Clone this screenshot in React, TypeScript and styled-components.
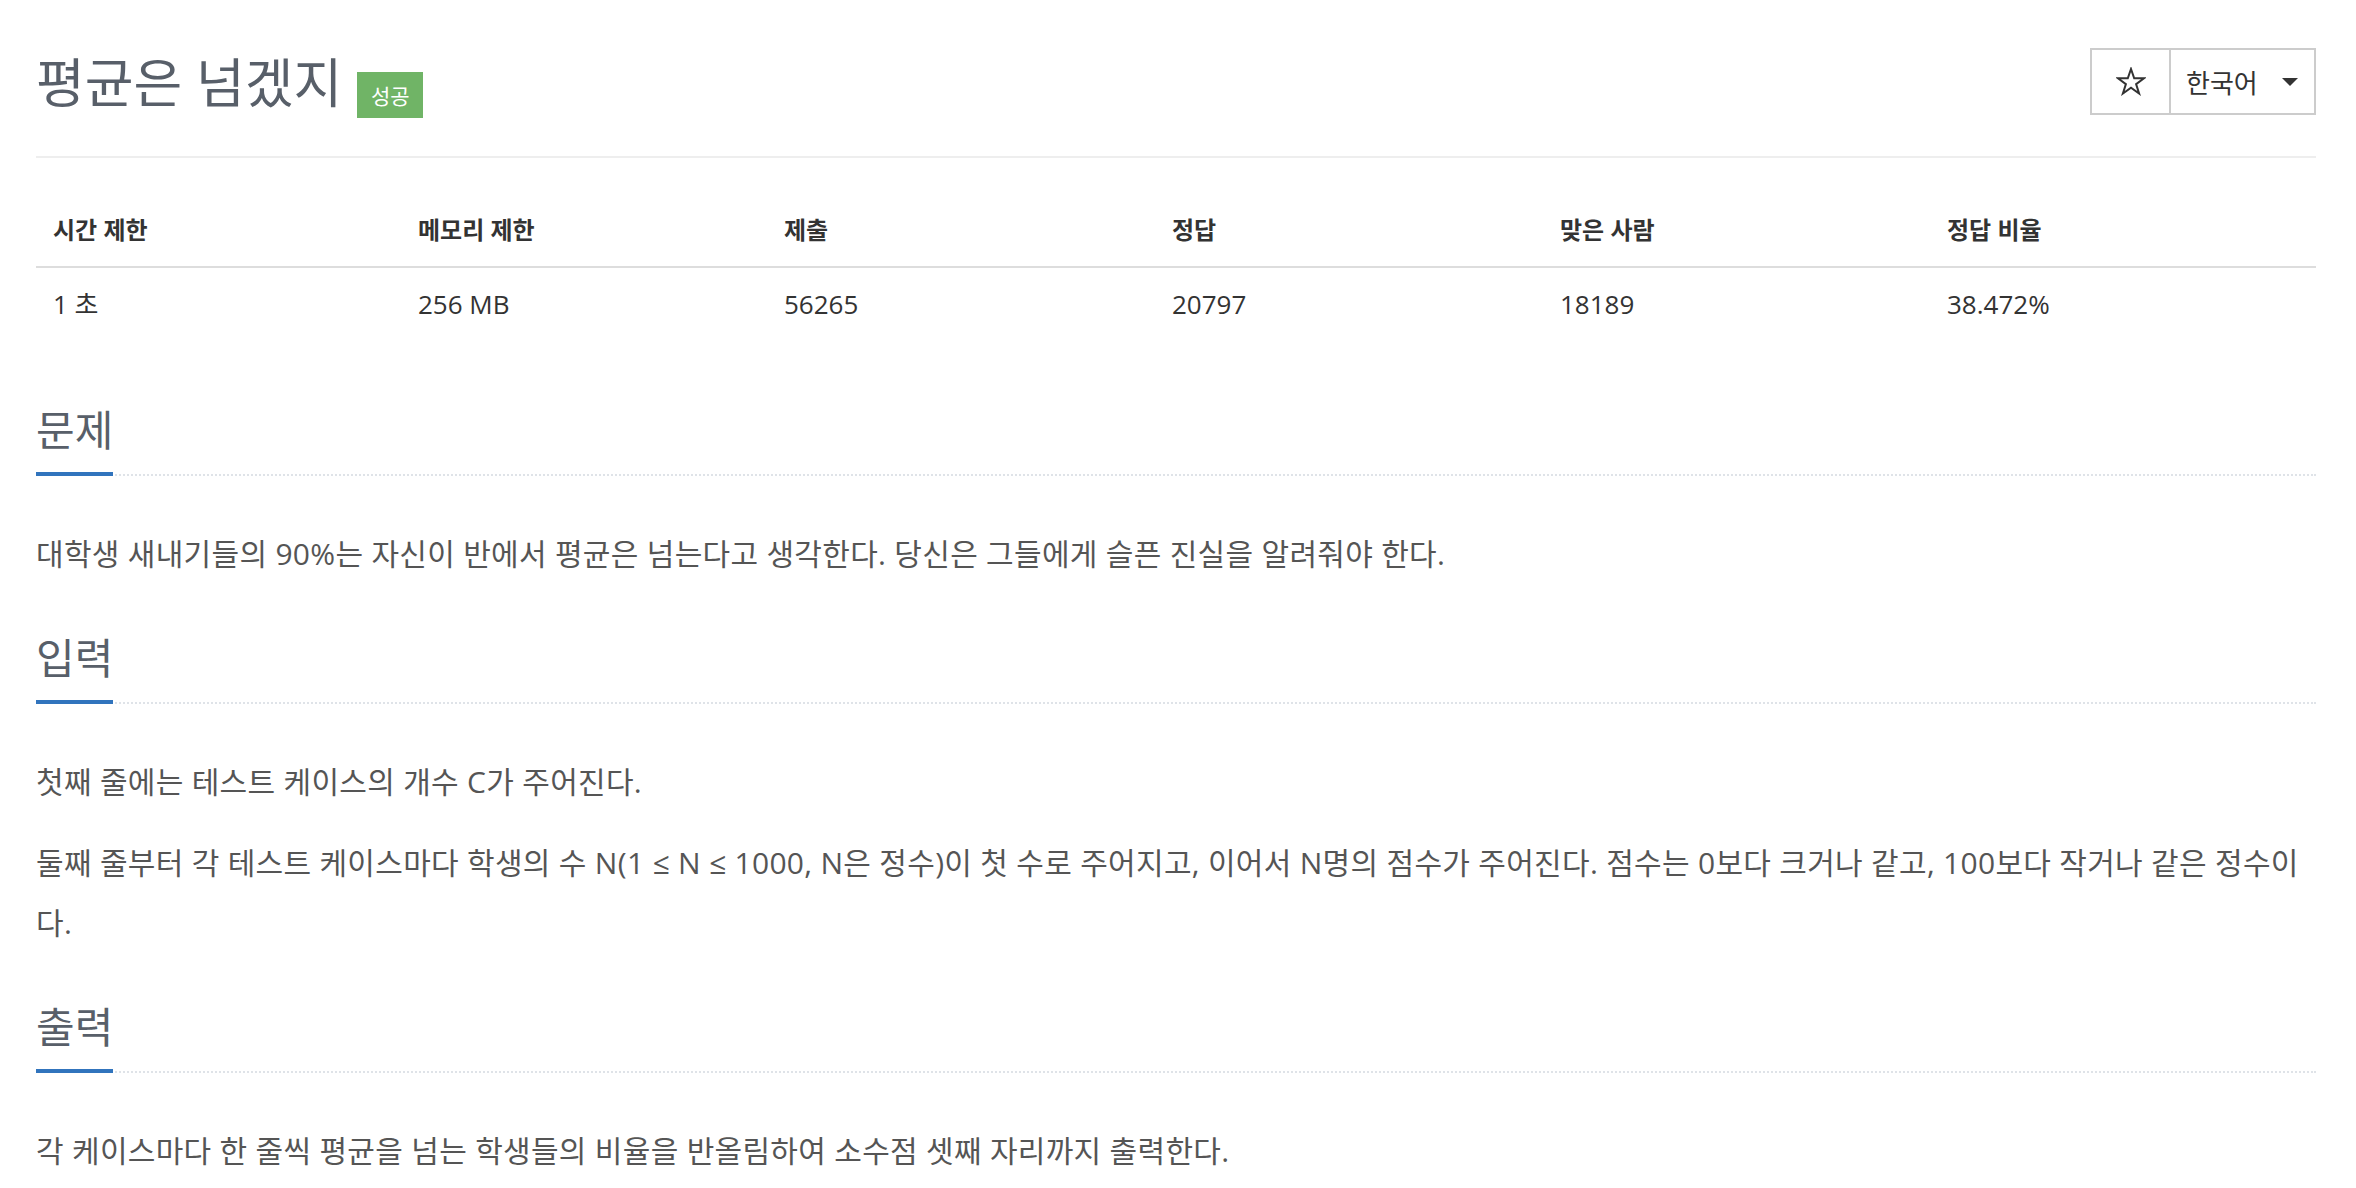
import styled, { createGlobalStyle } from "styled-components";

const GlobalStyle = createGlobalStyle`
  body {
    margin: 0;
    background: #fff;
    font-family: "Open Sans", "Noto Sans CJK KR", sans-serif;
  }
`;

const Page = styled.div`
  width: 2280px;
  margin-left: 36px;
`;

const Header = styled.header`
  display: flex;
  justify-content: space-between;
  align-items: flex-start;
  padding: 48px 0 38px;
  border-bottom: 2px solid #eee;
`;

const TitleRow = styled.div`
  display: flex;
  align-items: flex-end;
  gap: 15px;
`;

const Title = styled.h1`
  margin: 0;
  font-size: 53px;
  line-height: 70px;
  font-weight: 400;
  color: #585f69;
`;

const Badge = styled.span`
  display: inline-flex;
  align-items: center;
  justify-content: center;
  width: 66px;
  height: 46px;
  background: #70b466;
  color: #fff;
  font-size: 21px;
`;

const ButtonGroup = styled.div`
  display: flex;
  height: 67px;
  box-sizing: border-box;
  border: 2px solid #ccc;
`;

const StarButton = styled.div`
  display: flex;
  align-items: center;
  justify-content: center;
  width: 77px;
  border-right: 2px solid #ccc;
`;

const LangButton = styled.div`
  display: flex;
  align-items: center;
  width: 143px;
  box-sizing: border-box;
  padding: 0 16px 0 15px;
  font-size: 26px;
  color: #333;
`;

const Caret = styled.span`
  margin-left: auto;
  width: 0;
  height: 0;
  border-left: 8px solid transparent;
  border-right: 8px solid transparent;
  border-top: 8px solid #333;
`;

const StatTable = styled.div`
  display: grid;
  grid-template-columns: 365px 366px 388px 388px 387px 386px;
  margin-top: 36px;
`;

const HeadCell = styled.div`
  padding: 16px 17px;
  line-height: 40px;
  font-size: 24px;
  font-weight: 700;
  color: #333;
  border-bottom: 2px solid #ddd;
`;

const Cell = styled.div`
  padding: 16px 17px;
  line-height: 40px;
  font-size: 26px;
  color: #333;
`;

const Section = styled.section`
  margin-top: 44px;
  &:first-of-type {
    margin-top: 60px;
  }
`;

const Headline = styled.div`
  display: flex;
  border-bottom: 2px dotted #dfe3e8;
`;

const HeadlineText = styled.h2`
  margin: 0 0 -2px;
  padding-bottom: 12px;
  font-size: 42px;
  line-height: 60px;
  font-weight: 400;
  color: #585f69;
  border-bottom: 4px solid #3174bd;
`;

const Paragraph = styled.p`
  margin: 21px 0 0;
  font-size: 30px;
  letter-spacing: 0.3px;
  line-height: 60px;
  color: #555;
  &:first-of-type {
    margin-top: 48px;
  }
`;

const StarIcon = () => (
  <svg width="30" height="29" viewBox="0 0 30 29">
    <polygon
      points="15,2 18.2,11.3 28,11.3 20.1,17.1 23.1,26.5 15,20.7 6.9,26.5 9.9,17.1 2,11.3 11.8,11.3"
      fill="none"
      stroke="#333"
      strokeWidth="2"
      strokeLinejoin="miter"
    />
  </svg>
);

const stats = [
  { label: "시간 제한", value: "1 초" },
  { label: "메모리 제한", value: "256 MB" },
  { label: "제출", value: "56265" },
  { label: "정답", value: "20797" },
  { label: "맞은 사람", value: "18189" },
  { label: "정답 비율", value: "38.472%" },
];

const sections = [
  {
    title: "문제",
    paragraphs: [
      "대학생 새내기들의 90%는 자신이 반에서 평균은 넘는다고 생각한다. 당신은 그들에게 슬픈 진실을 알려줘야 한다.",
    ],
  },
  {
    title: "입력",
    paragraphs: [
      "첫째 줄에는 테스트 케이스의 개수 C가 주어진다.",
      "둘째 줄부터 각 테스트 케이스마다 학생의 수 N(1 ≤ N ≤ 1000, N은 정수)이 첫 수로 주어지고, 이어서 N명의 점수가 주어진다. 점수는 0보다 크거나 같고, 100보다 작거나 같은 정수이다.",
    ],
  },
  {
    title: "출력",
    paragraphs: [
      "각 케이스마다 한 줄씩 평균을 넘는 학생들의 비율을 반올림하여 소수점 셋째 자리까지 출력한다.",
    ],
  },
];

export default function App() {
  return (
    <>
      <GlobalStyle />
      <Page>
        <Header>
          <TitleRow>
            <Title>평균은 넘겠지</Title>
            <Badge>성공</Badge>
          </TitleRow>
          <ButtonGroup>
            <StarButton>
              <StarIcon />
            </StarButton>
            <LangButton>
              한국어
              <Caret />
            </LangButton>
          </ButtonGroup>
        </Header>

        <StatTable>
          {stats.map((s) => (
            <HeadCell key={s.label}>{s.label}</HeadCell>
          ))}
          {stats.map((s) => (
            <Cell key={s.label}>{s.value}</Cell>
          ))}
        </StatTable>

        {sections.map((sec) => (
          <Section key={sec.title}>
            <Headline>
              <HeadlineText>{sec.title}</HeadlineText>
            </Headline>
            {sec.paragraphs.map((p, i) => (
              <Paragraph key={i}>{p}</Paragraph>
            ))}
          </Section>
        ))}
      </Page>
    </>
  );
}
